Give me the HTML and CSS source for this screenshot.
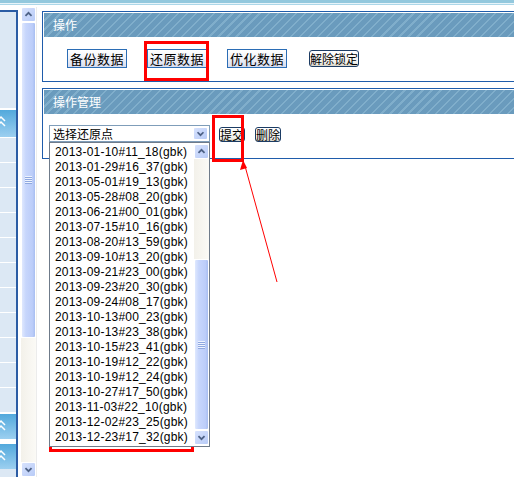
FILE: index.html
```html
<!DOCTYPE html>
<html lang="zh-CN">
<head>
    <meta charset="UTF-8">
    <title>数据库管理</title>
    <link rel="stylesheet" href="styles.css">
</head>
<body>
    <div class="topband"></div>

    <div class="frame">
        <!-- left menu frame, only its right edge shows -->
        <div class="sidebar">
            <div class="side-head"></div>
            <div class="side-tab first"><svg viewBox="0 0 6 25"><polyline points="-3,11 1,7 5,11"/><polyline points="-3,16 1,12 5,16"/></svg></div>
            <div class="side-row"></div>
            <div class="side-row"></div>
            <div class="side-row"></div>
            <div class="side-row"></div>
            <div class="side-row"></div>
            <div class="side-row"></div>
            <div class="side-row"></div>
            <div class="side-row"></div>
            <div class="side-row"></div>
            <div class="side-row"></div>
            <div class="side-row"></div>
            <div class="side-tab low"><svg viewBox="0 0 6 25"><polyline points="-3,11 1,7 5,11"/><polyline points="-3,16 1,12 5,16"/></svg></div>
            <div class="side-tab low gap"><svg viewBox="0 0 6 25"><polyline points="-3,11 1,7 5,11"/><polyline points="-3,16 1,12 5,16"/></svg></div>
        </div>

        <!-- menu frame scrollbar -->
        <div class="vscroll">
            <div class="sb-btn"><svg viewBox="0 0 15 15"><polyline points="4,9 7.5,5.5 11,9"/></svg></div>
            <div class="sb-thumb big"><span class="grip"></span></div>
            <div class="sb-track"></div>
            <div class="sb-btn"><svg viewBox="0 0 15 15"><polyline points="4,6 7.5,9.5 11,6"/></svg></div>
        </div>

        <div class="main">
            <div class="panel">
                <div class="panel-head">操作</div>
                <div class="panel-body tools">
                    <button class="tool-btn">备份数据</button>
                    <button class="tool-btn">还原数据</button>
                    <button class="tool-btn">优化数据</button>
                    <button class="xp-btn wide">解除锁定</button>
                </div>
            </div>

            <div class="panel">
                <div class="panel-head">操作管理</div>
                <div class="panel-body restore">
                    <div class="picker">
                        <div class="select">
                            <span>选择还原点</span>
                            <span class="drop"><svg viewBox="0 0 15 13"><polyline points="4,5 7.5,8.5 11,5"/></svg></span>
                        </div>
                        <div class="listbox">
                            <ul class="items">
                                <li>2013-01-10#11_18(gbk)</li>
                                <li>2013-01-29#16_37(gbk)</li>
                                <li>2013-05-01#19_13(gbk)</li>
                                <li>2013-05-28#08_20(gbk)</li>
                                <li>2013-06-21#00_01(gbk)</li>
                                <li>2013-07-15#10_16(gbk)</li>
                                <li>2013-08-20#13_59(gbk)</li>
                                <li>2013-09-10#13_20(gbk)</li>
                                <li>2013-09-21#23_00(gbk)</li>
                                <li>2013-09-23#20_30(gbk)</li>
                                <li>2013-09-24#08_17(gbk)</li>
                                <li>2013-10-13#00_23(gbk)</li>
                                <li>2013-10-13#23_38(gbk)</li>
                                <li>2013-10-15#23_41(gbk)</li>
                                <li>2013-10-19#12_22(gbk)</li>
                                <li>2013-10-19#12_24(gbk)</li>
                                <li>2013-10-27#17_50(gbk)</li>
                                <li>2013-11-03#22_10(gbk)</li>
                                <li>2013-12-02#23_25(gbk)</li>
                                <li>2013-12-23#17_32(gbk)</li>
                            </ul>
                            <div class="lscroll">
                                <div class="sb-btn"><svg viewBox="0 0 15 15"><polyline points="4,9 7.5,5.5 11,9"/></svg></div>
                                <div class="sb-track"></div>
                                <div class="sb-thumb small"><span class="grip"></span></div>
                                <div class="sb-btn"><svg viewBox="0 0 15 15"><polyline points="4,6 7.5,9.5 11,6"/></svg></div>
                            </div>
                        </div>
                    </div>
                    <button class="xp-btn">提交</button>
                    <button class="xp-btn">删除</button>
                </div>
            </div>
        </div>
    </div>

    <!-- red markers drawn on top -->
    <svg class="marks" width="514" height="477" viewBox="0 0 514 477">
        <rect x="145.5" y="42.5" width="62" height="37"/>
        <rect x="213.5" y="116.5" width="29" height="44"/>
        <rect x="50.5" y="430.5" width="142" height="20"/>
        <line x1="277" y1="282" x2="245" y2="166"/>
        <polygon points="243,160 240,170 247,168"/>
    </svg>
</body>
</html>
```

FILE: styles.css
```css
* {
    box-sizing: border-box;
}

html, body {
    margin: 0;
    padding: 0;
}

body {
    position: relative;
    width: 514px;
    height: 477px;
    overflow: hidden;
    background: #ffffff;
    font-family: "Noto Sans CJK SC", "Liberation Sans", sans-serif;
    font-size: 12px;
    color: #000;
}

.topband {
    height: 5px;
    background: linear-gradient(#93c8dd 0 3px, #e8f4f9 3px 4px, #acd7e8 4px);
}

.frame {
    display: flex;
    align-items: flex-start;
    height: 472px;
}

/* left menu */
.sidebar {
    width: 18px;
    height: 467px;
    margin-top: 5px;
    display: flex;
    flex-direction: column;
    background: #dce8f4;
    border-top: 2px solid #2b5ca4;
    border-right: 2px solid #2b5ca4;
}

.side-head {
    height: 98px;
    border-bottom: 2px solid #fff;
}

.side-tab {
    height: 27px;
    background: linear-gradient(#52a9dc, #9ccff0);
}

.side-tab svg {
    display: block;
    width: 6px;
    height: 25px;
}

.side-tab polyline {
    fill: none;
    stroke: #fff;
    stroke-width: 1.5;
}

.side-tab.low {
    height: 27px;
    border-top: 2px solid #fff;
}

.side-tab.gap {
    height: 30px;
    border-top-width: 5px;
}

.side-row {
    height: 25px;
    border-top: 1px solid #fff;
}

/* xp style scrollbars */
.vscroll {
    width: 16px;
    height: 470px;
    margin: 2px 0 0 3px;
    display: flex;
    flex-direction: column;
    border-right: 1px solid #ececec;
}

.sb-btn {
    width: 15px;
    height: 15px;
    flex: none;
    border: 1px solid #fff;
    border-radius: 2px;
    background: linear-gradient(135deg, #d7e2fd, #b8cbf7);
}

.sb-btn svg {
    display: block;
    width: 13px;
    height: 13px;
}

.sb-btn polyline,
.drop polyline {
    fill: none;
    stroke: #4d6185;
    stroke-width: 2;
}

.sb-thumb {
    width: 15px;
    flex: none;
    display: flex;
    align-items: center;
    justify-content: center;
    border: 1px solid #fff;
    border-radius: 2px;
    background: linear-gradient(90deg, #dfe8fe, #c7d6fc 30%, #bccdf9 80%, #a8bef1);
}

.sb-thumb.big {
    height: 316px;
}

.sb-thumb.small {
    height: 171px;
}

.grip {
    width: 7px;
    height: 8px;
    background: repeating-linear-gradient(#eef3fe 0 1px, #8fa8e0 1px 2px);
}

.sb-track {
    flex: 1;
    background: linear-gradient(90deg, #f3f1ea, #fbfaf6);
}

/* content */
.main {
    flex: 1;
    min-width: 0;
    padding: 6px 0 0 5px;
}

.panel {
    width: 520px;
    margin-bottom: 6px;
    padding: 1px;
    border: 1px solid #1f5cab;
    background: #fff;
}

.panel-head {
    height: 24px;
    line-height: 24px;
    padding-left: 9px;
    color: #fff;
    background: repeating-linear-gradient(135deg, #6a9bbd 0 4.8px, #80aecb 4.8px 6.4px);
}

.panel-body {
    height: 43px;
    display: flex;
}

.tools {
    align-items: center;
    gap: 20px;
    padding-left: 23px;
}

.tool-btn {
    width: 60px;
    height: 19px;
    padding: 0;
    border: 1px solid #2b6db5;
    background: linear-gradient(#ffffff, #f1f3f9 45%, #d6dcef);
    font-family: inherit;
    font-size: 13px;
    line-height: 17px;
    letter-spacing: 0.5px;
    color: #000;
}

.xp-btn {
    height: 15px;
    padding: 0;
    border: 1px solid #1c3c64;
    border-radius: 3px;
    background: linear-gradient(#ffffff, #f2f1ec 75%, #d8d3c6);
    font-family: inherit;
    font-size: 12px;
    line-height: 13px;
    color: #000;
}

.xp-btn.wide {
    width: 50px;
    height: 17px;
    line-height: 15px;
    margin-left: 2px;
}

.restore {
    align-items: flex-start;
    padding-top: 11px;
}

.restore .xp-btn {
    margin: 2px 0 0 10px;
}

.picker {
    position: relative;
    z-index: 2;
    width: 161px;
    margin: 0 -1px 0 5px;
}

.select {
    height: 17px;
    display: flex;
    align-items: center;
    justify-content: space-between;
    padding: 0 1px 0 3px;
    border: 1px solid #7f9db9;
    line-height: 15px;
}

.drop {
    width: 15px;
    height: 13px;
    border: 1px solid #fff;
    border-radius: 2px;
    background: linear-gradient(135deg, #d7e2fd, #b8cbf7);
}

.drop svg {
    display: block;
    width: 13px;
    height: 11px;
}

/* opened option list */
.listbox {
    position: absolute;
    top: 100%;
    left: 0;
    width: 161px;
    height: 305px;
    display: flex;
    border: 1px solid #6f7b8a;
    background: #fff;
}

.items {
    flex: 1;
    margin: 0;
    padding: 2px 0 0 5px;
    list-style: none;
    font-family: "Liberation Sans", Arial, sans-serif;
    font-size: 12px;
    letter-spacing: 0.2px;
    line-height: 15px;
    white-space: nowrap;
}

.lscroll {
    width: 15px;
    display: flex;
    flex-direction: column;
    padding: 1px 0;
}

.marks {
    position: absolute;
    top: 0;
    left: 0;
    pointer-events: none;
}

.marks rect {
    fill: none;
    stroke: #f00;
    stroke-width: 3;
}

.marks line {
    stroke: #f00;
    stroke-width: 1;
}

.marks polygon {
    fill: #f00;
}
```
